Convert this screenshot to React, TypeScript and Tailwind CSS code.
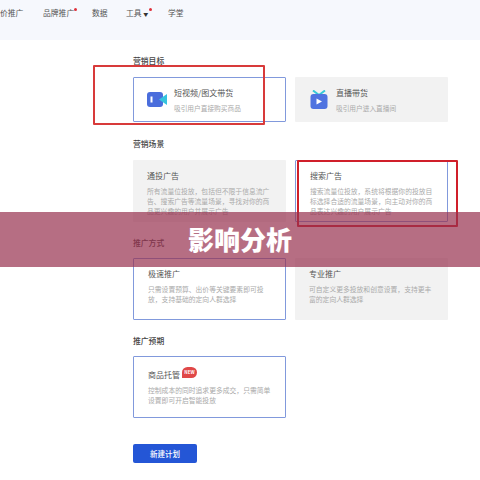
const font = "[font-family:'Noto_Sans_CJK_SC','Noto_Sans',sans-serif]";

function VideoIcon() {
  return (
    <svg width="20" height="17" viewBox="0 0 20 17" className="mr-[7px] shrink-0">
      <rect x="0" y="1" width="16" height="15" rx="3" fill="#4a6ddc" />
      <rect x="3.5" y="5.5" width="2" height="6" fill="#fff" />
      <path d="M20 3 L20 14 L12 8.5 Z" fill="#35c3de" />
    </svg>
  );
}

function TvIcon() {
  return (
    <svg width="18" height="19" viewBox="0 0 18 19" className="ml-[1px] mr-[8px] shrink-0">
      <path d="M3 0.5 L9 5 L15 0.5" fill="none" stroke="#35c9d8" strokeWidth="2" />
      <rect x="0.5" y="4" width="17" height="15" rx="3" fill="#4f73e0" />
      <path d="M6.5 8.5 L12 11.5 L6.5 14.5 Z" fill="#fff" />
    </svg>
  );
}

function GoalCard({ icon, title, desc, active }: { icon: React.ReactNode; title: string; desc: string; active?: boolean }) {
  return (
    <div
      className={`flex h-[45px] w-[153px] items-center rounded-[1px] ${
        active ? 'border border-[#8199dc] bg-white pl-[13px]' : 'bg-[#f2f2f2] pl-[14px]'
      }`}
    >
      {icon}
      <div>
        <div className="text-[8px] leading-[12px] text-[#555]">{title}</div>
        <div className="mt-[4px] whitespace-nowrap text-[6.7px] leading-[10px] text-[#aaa]">{desc}</div>
      </div>
    </div>
  );
}

function PlanCard({ title, desc, active, badge }: { title: string; desc: string; active?: boolean; badge?: boolean }) {
  return (
    <div
      className={`h-[62px] w-[153px] rounded-[1px] px-[14px] ${
        active ? 'border border-[#8199dc] bg-white' : 'bg-[#f2f2f2]'
      } ${badge ? 'pt-[12px]' : active ? 'pt-[9px]' : 'pt-[10px]'}`}
    >
      <div className="flex items-start text-[8px] leading-[12px] text-[#555]">
        {title}
        {badge && (
          <span className="-mt-[2px] ml-[2px] flex h-[11px] w-[15px] items-center justify-center rounded-full rounded-bl-none bg-[#e04848] text-[4.5px] font-bold leading-none text-white">
            NEW
          </span>
        )}
      </div>
      <div className="mt-[4px] text-[6.8px] leading-[10px] text-[#aaa]">{desc}</div>
    </div>
  );
}

function Section({ title, tight, children }: { title: string; tight?: boolean; children: React.ReactNode }) {
  return (
    <section className={tight ? '-mt-[1px]' : ''}>
      <h2 className={`text-[7.8px] font-medium leading-[12px] text-[#444] ${tight ? 'mb-[9px]' : 'mb-[10px]'}`}>{title}</h2>
      <div className="flex gap-[9px]">{children}</div>
    </section>
  );
}

export default function App() {
  return (
    <div className={`relative h-[480px] w-[480px] overflow-hidden bg-white ${font}`}>
      <header className="flex h-[40px] items-start bg-[#f6f8fd] pt-[7px] text-[7.8px] leading-[12px] text-[#555]">
        <span className="w-[43px] whitespace-nowrap">价推广</span>
        <span className="relative w-[49px]">
          品牌推广
          <i className="absolute left-[31px] top-[1px] h-[3px] w-[3px] rounded-full bg-[#e0303a]" />
        </span>
        <span className="w-[34px]">数据</span>
        <span className="relative w-[42px]">
          工具 <span className="text-[5px] text-[#333]">▼</span>
          <i className="absolute left-[23px] top-[1px] h-[3px] w-[3px] rounded-full bg-[#e0303a]" />
        </span>
        <span>学堂</span>
      </header>

      <main className="ml-[133px] flex w-[320px] flex-col gap-[16px] pt-[15px]">
        <Section title="营销目标">
          <GoalCard icon={<VideoIcon />} title="短视频/图文带货" desc="吸引用户直接购买商品" active />
          <GoalCard icon={<TvIcon />} title="直播带货" desc="吸引用户进入直播间" />
        </Section>
        <Section title="营销场景">
          <PlanCard title="通投广告" desc="所有流量位投放，包括但不限于信息流广告、搜索广告等流量场景，寻找对你的商品更兴趣的用户并展示广告" />
          <PlanCard title="搜索广告" desc="搜索流量位投放，系统将根据你的投放目标选择合适的流量场景，向主动对你的商品表达兴趣的用户展示广告" active />
        </Section>
        <Section title="推广方式" tight>
          <PlanCard title="极速推广" desc="只需设置预算、出价等关键要素即可投放，支持基础的定向人群选择" active />
          <PlanCard title="专业推广" desc="可自定义更多投放和创意设置，支持更丰富的定向人群选择" />
        </Section>
        <Section title="推广预期" tight>
          <PlanCard title="商品托管" desc="控制成本的同时追求更多成交，只需简单设置即可开启智能投放" active badge />
        </Section>
        <button className="mt-[10px] h-[19px] w-[64px] rounded-[2px] bg-[#2456d6] text-[7.5px] font-medium text-white">
          新建计划
        </button>
      </main>

      <div className="absolute left-[93px] top-[65px] h-[60px] w-[172px] rounded-[1px] border-2 border-[#d83a3a]" />
      <div className="absolute left-[297px] top-[160px] h-[67px] w-[161px] rounded-[1px] border-2 border-[#d01f2a]" />

      <div className="absolute left-0 top-[212px] flex h-[55px] w-[480px] items-center justify-center bg-[#97304f]/70 pb-[3px]">
        <span className="text-[26px] font-black text-white">影响分析</span>
      </div>
    </div>
  );
}
